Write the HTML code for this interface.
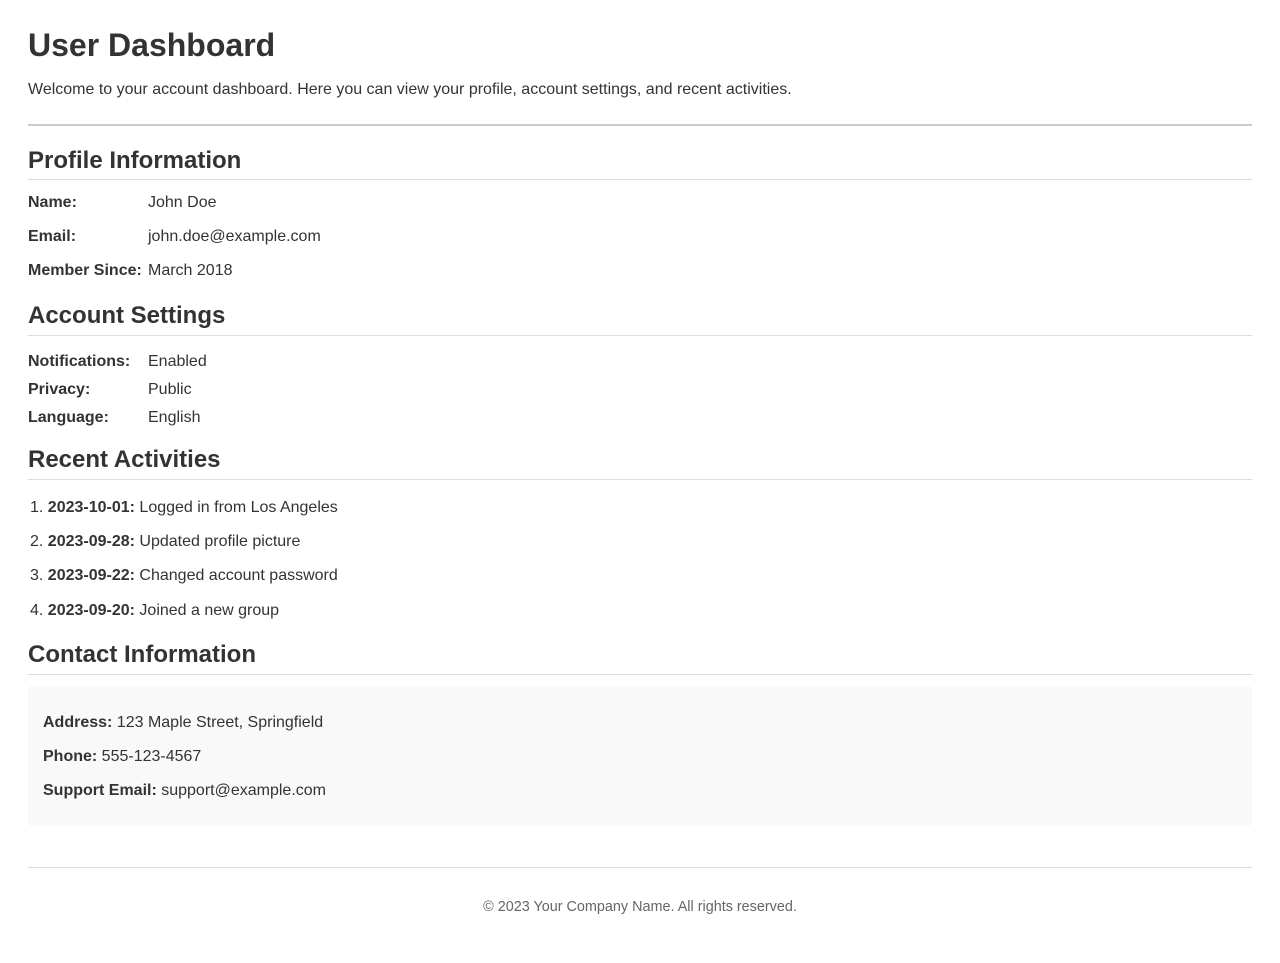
<!DOCTYPE html>
<html><head><meta charset="utf-8"><style>
*{margin:0;padding:0;box-sizing:border-box}
body{width:1280px;height:963px;background:#fff;font-family:"Liberation Sans",Arial,sans-serif;color:#333;position:relative;overflow:hidden}
.a{position:absolute;white-space:nowrap}
.t{font-size:16px;line-height:18px}
.h2{font-size:24px;line-height:28px;font-weight:bold}
.line{position:absolute;left:28px;width:1224px;height:1px;background:#ddd}
b{font-weight:bold}
</style></head><body>
<div class="a" style="left:28px;top:27px;font-size:32px;line-height:36px;font-weight:bold">User Dashboard</div>
<div class="a t" style="left:28px;top:81px">Welcome to your account dashboard. Here you can view your profile, account settings, and recent activities.</div>
<div class="line" style="top:124px;height:2px;background:#ccc"></div>

<div class="a h2" style="left:28px;top:147px">Profile Information</div>
<div class="line" style="top:179px"></div>
<div class="a t" style="left:28px;top:194px"><b>Name:</b></div><div class="a t" style="left:148px;top:194px">John Doe</div>
<div class="a t" style="left:28px;top:228px"><b>Email:</b></div><div class="a t" style="left:148px;top:228px">john.doe@example.com</div>
<div class="a t" style="left:28px;top:262px"><b>Member Since:</b></div><div class="a t" style="left:148px;top:262px">March 2018</div>

<div class="a h2" style="left:28px;top:302px">Account Settings</div>
<div class="line" style="top:335px"></div>
<div class="a t" style="left:28px;top:353px"><b>Notifications:</b></div><div class="a t" style="left:148px;top:353px">Enabled</div>
<div class="a t" style="left:28px;top:381px"><b>Privacy:</b></div><div class="a t" style="left:148px;top:381px">Public</div>
<div class="a t" style="left:28px;top:409px"><b>Language:</b></div><div class="a t" style="left:148px;top:409px">English</div>

<div class="a h2" style="left:28px;top:446px">Recent Activities</div>
<div class="line" style="top:479px"></div>
<div class="a t" style="left:30px;top:499px">1. <b>2023-10-01:</b> Logged in from Los Angeles</div>
<div class="a t" style="left:30px;top:533px">2. <b>2023-09-28:</b> Updated profile picture</div>
<div class="a t" style="left:30px;top:567px">3. <b>2023-09-22:</b> Changed account password</div>
<div class="a t" style="left:30px;top:602px">4. <b>2023-09-20:</b> Joined a new group</div>

<div class="a h2" style="left:28px;top:641px">Contact Information</div>
<div class="line" style="top:674px"></div>
<div class="a" style="left:28px;top:686px;width:1224px;height:140px;background:#f9f9f9;border-radius:4px"></div>
<div class="a t" style="left:43px;top:714px"><b>Address:</b> 123 Maple Street, Springfield</div>
<div class="a t" style="left:43px;top:748px"><b>Phone:</b> 555-123-4567</div>
<div class="a t" style="left:43px;top:782px"><b>Support Email:</b> support@example.com</div>

<div class="line" style="top:867px"></div>
<div class="a" style="left:0;width:1280px;text-align:center;top:898px;font-size:14.4px;line-height:18px;color:#666">© 2023 Your Company Name. All rights reserved.</div>
</body></html>
